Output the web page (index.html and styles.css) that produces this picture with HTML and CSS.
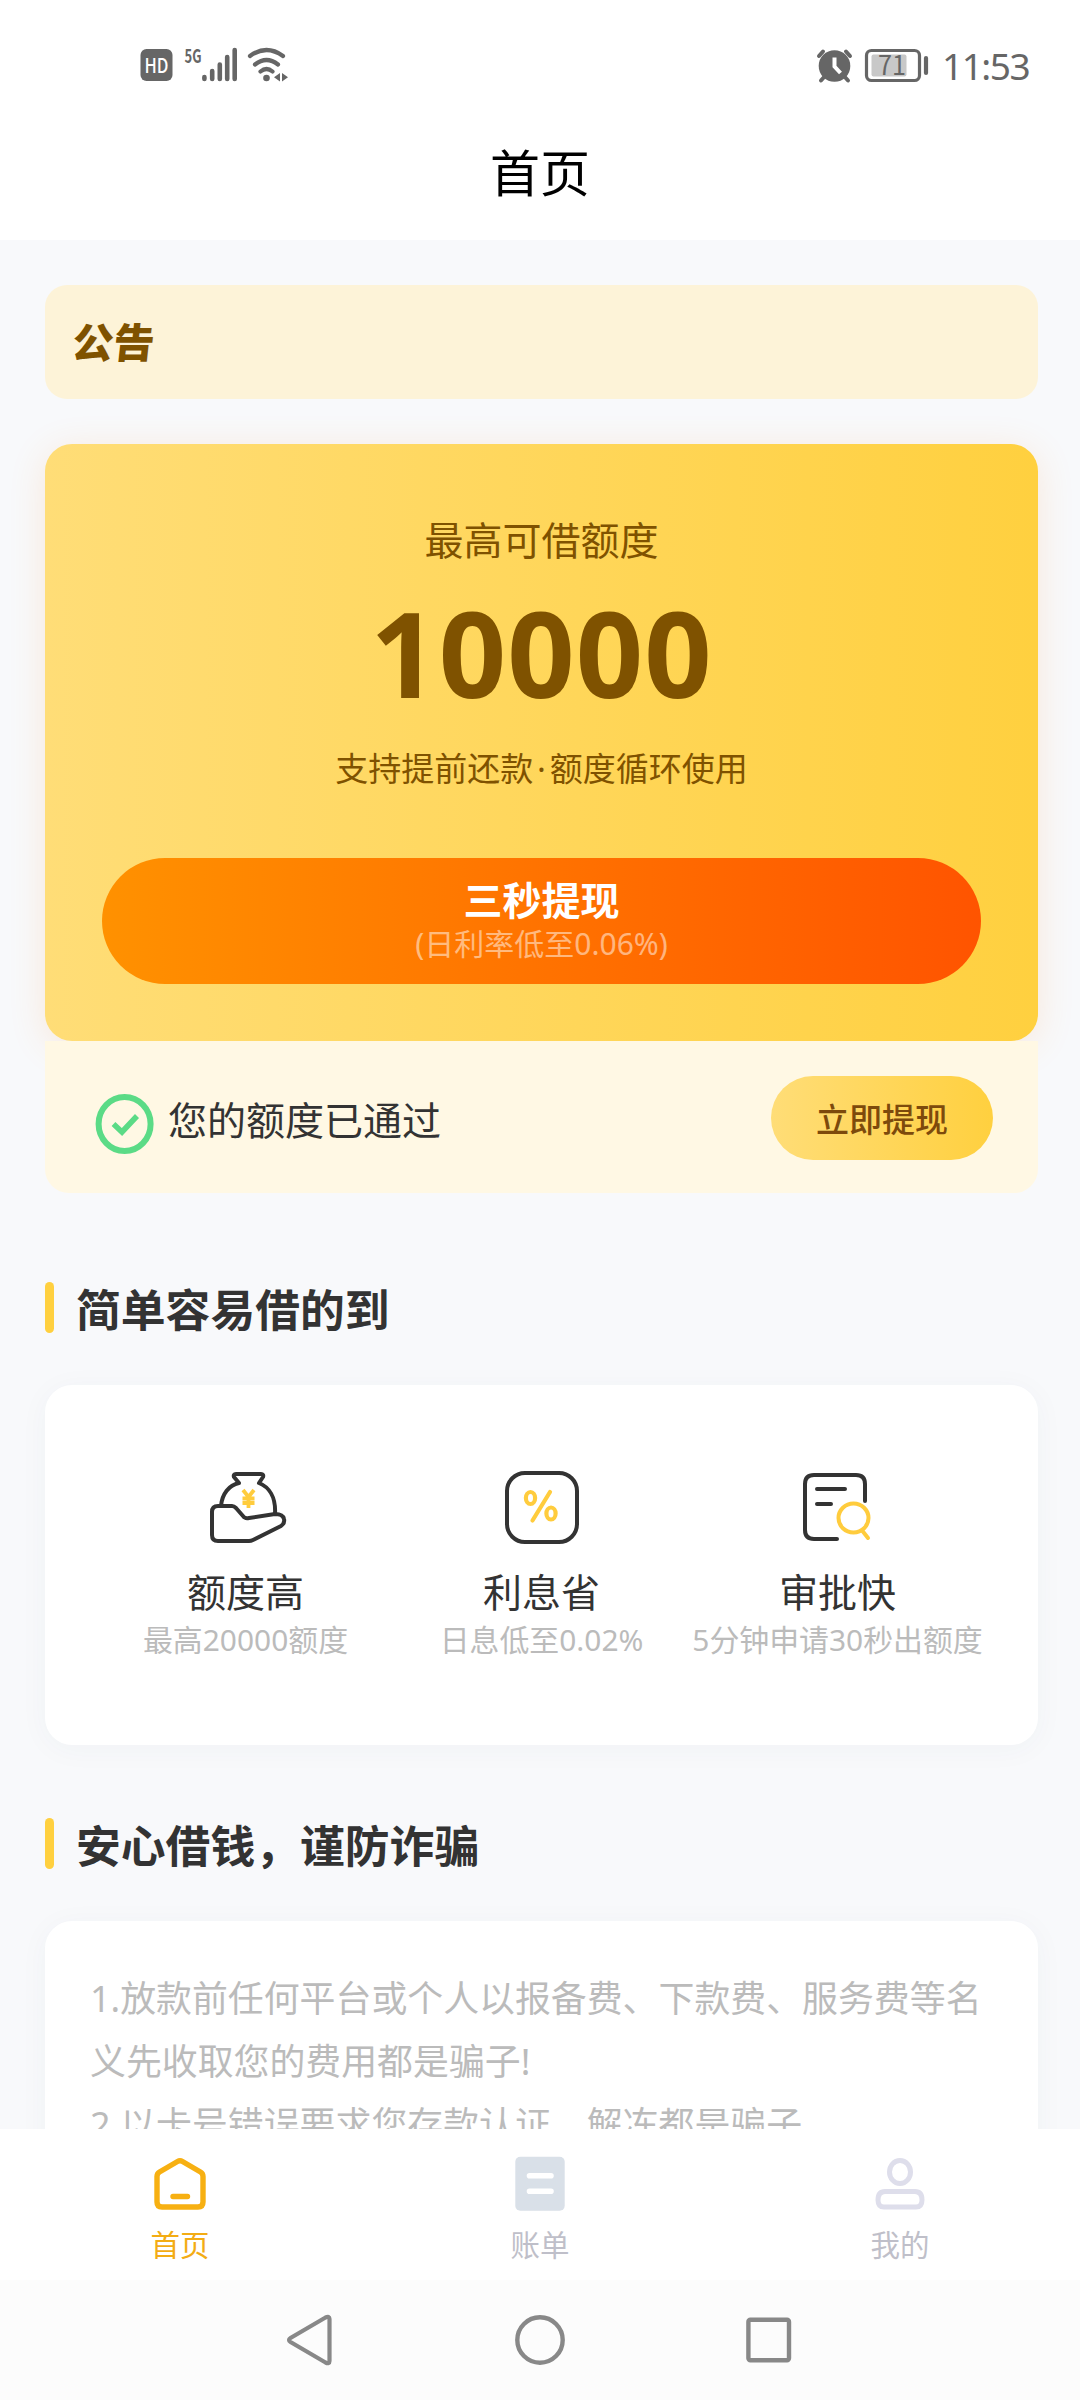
FILE: index.html
```html
<!DOCTYPE html>
<html lang="zh-CN">
<head>
<meta charset="utf-8">
<title>首页</title>
<link rel="stylesheet" href="styles.css">
</head>
<body>
<div class="screen">
  <header class="top">
    <div class="status">
      <svg class="status-left" width="160" height="44" viewBox="0 0 160 44">
        <rect x="5.500" y="7" width="32" height="32" rx="6" fill="#666"/>
        <text x="9.500" y="30.500" font-size="20" font-weight="500" fill="#fff" textLength="24" lengthAdjust="spacingAndGlyphs">HD</text>
        <text x="49.500" y="21" font-size="19" font-weight="700" fill="#666" textLength="17" lengthAdjust="spacingAndGlyphs">5G</text>
        <g stroke="#666" stroke-width="4.600" stroke-linecap="round">
          <path d="M69.400 35v2M77.200 29v8M84.800 22.500v14.500M92.200 15v22M99.700 8v29"/>
        </g>
        <g fill="none" stroke="#666" stroke-width="4.200" stroke-linecap="round">
          <path d="M115 14q16.500-12 33 0M120 22.500q11.500-9 23 0M125.500 29.500q6-5 12 0"/>
        </g>
        <circle cx="131.500" cy="36" r="3.300" fill="#666"/>
        <path d="M145 31v8.500l-6-4.200zM147 31v8.500l6-4.200z" fill="#666"/>
      </svg>
      <div class="status-right">
        <svg width="116" height="44" viewBox="0 0 116 44">
          <g stroke="#666" stroke-width="4" stroke-linecap="round" fill="none">
            <path d="M5 14l4-4.500M36 14l-4-4.500M11 34l-4 4.500M30 34l4 4.500"/>
          </g>
          <circle cx="20.500" cy="24" r="15.800" fill="#666"/>
          <path d="M20.500 15.500v9l6 6.500" fill="none" stroke="#fff" stroke-width="4"/>
          <rect x="52.500" y="8.500" width="53" height="30" rx="5" fill="none" stroke="#666" stroke-width="3.200"/>
          <rect x="57.500" y="12.500" width="35" height="22" rx="2" fill="#c8c8c8"/>
          <text x="64" y="33" font-size="27" fill="#666" textLength="28" lengthAdjust="spacingAndGlyphs">71</text>
          <path d="M112 16v15" stroke="#666" stroke-width="4.200" stroke-linecap="round"/>
        </svg>
        <span class="time">11:53</span>
      </div>
    </div>
    <h1 class="title">首页</h1>
  </header>

  <main class="content">
    <div class="notice"><span class="notice-tag">公告</span></div>

    <section class="hero">
      <p class="hero-label">最高可借额度</p>
      <p class="hero-amount">10000</p>
      <p class="hero-note">支持提前还款<span class="dot">·</span>额度循环使用</p>
      <div class="hero-button">
        <strong>三秒提现</strong>
        <span>(日利率低至0.06%)</span>
      </div>
    </section>

    <div class="passed">
      <svg width="60" height="62" viewBox="0 0 60 62">
        <ellipse cx="29.600" cy="31" rx="26" ry="27" fill="none" stroke="#5bdb86" stroke-width="6"/>
        <path d="M18.500 31l8.500 8 15-16" fill="none" stroke="#5bdb86" stroke-width="5.500"/>
      </svg>
      <span class="passed-text">您的额度已通过</span>
      <span class="passed-button">立即提现</span>
    </div>

    <h2 class="heading">简单容易借的到</h2>
    <section class="features">
      <div class="feature">
        <svg width="80" height="76" viewBox="-2 0 80 76">
          <g fill="none" stroke="#333" stroke-width="4" stroke-linejoin="round" stroke-linecap="round">
            <path d="M13 34C14 22 21 13 31 11L26 5Q25 2 28 2H53Q56 2 55 5L51 11C61 15 68 25 67 42"/>
            <path d="M10 34H24Q26 34 28 36L35 44Q37 47 41 46L67 42Q75 42 76 47Q77 51 73 54L45 68Q43 69 41 69H10Q4 69 4 63V40Q4 34 10 34Z"/>
          </g>
          <path d="M35 18l5.500 7 5.500-7M34.500 26.500h12M34.500 31h12M40.500 25v11" fill="none" stroke="#ffcc3d" stroke-width="3.800"/>
        </svg>
        <b>额度高</b>
        <small>最高20000额度</small>
      </div>
      <div class="feature">
        <svg width="80" height="76" viewBox="0 0 80 76">
          <rect x="5" y="1" width="70" height="69" rx="18" fill="none" stroke="#333" stroke-width="4"/>
          <g fill="none" stroke="#ffcc3d" stroke-width="4.200" stroke-linecap="round">
            <ellipse cx="28.500" cy="26" rx="4.600" ry="6"/>
            <ellipse cx="49" cy="41.500" rx="4.600" ry="6"/>
            <path d="M48 20L30.500 48.500"/>
          </g>
        </svg>
        <b>利息省</b>
        <small>日息低至0.02%</small>
      </div>
      <div class="feature">
        <svg width="80" height="76" viewBox="-1 0 80 76">
          <g fill="none" stroke="#333" stroke-width="4" stroke-linecap="round">
            <path d="M66 29V12Q66 3 57 3H15Q6 3 6 12V58Q6 67 15 67H38M18 17H46M18 32H32"/>
          </g>
          <g fill="none" stroke="#ffcc3d" stroke-width="4" stroke-linecap="round">
            <ellipse cx="54.500" cy="46" rx="15" ry="14.500"/>
            <path d="M63.500 59L69 66"/>
          </g>
        </svg>
        <b>审批快</b>
        <small>5分钟申请30秒出额度</small>
      </div>
    </section>

    <h2 class="heading heading-second">安心借钱，谨防诈骗</h2>
    <section class="tips">
      <p>1.放款前任何平台或个人以报备费、下款费、服务费等名<br>义先收取您的费用都是骗子!</p>
      <p>2.以卡号错误要求您存款认证，解冻都是骗子</p>
    </section>
  </main>

  <nav class="tabs">
    <div class="tab tab-active">
      <svg width="60" height="60" viewBox="0 0 60 60">
        <path d="M27.500 7.500Q30 6 32.500 7.500L50.500 18Q53 19.500 53 22.500V48Q53 53 48 53H12Q7 53 7 48V22.500Q7 19.500 9.500 18ZM23 42.500H37.500" fill="none" stroke="#f7b012" stroke-width="5.400" stroke-linecap="round"/>
      </svg>
      <span>首页</span>
    </div>
    <div class="tab">
      <svg width="60" height="60" viewBox="0 0 60 60">
        <rect x="5.300" y="2.700" width="49.400" height="54" rx="5" fill="#d9e0e8"/>
        <path d="M19.500 21.800H41M19.500 37.300H41" stroke="#fff" stroke-width="5.600" stroke-linecap="round"/>
      </svg>
      <span>账单</span>
    </div>
    <div class="tab">
      <svg width="60" height="60" viewBox="0 0 60 60">
        <g fill="none" stroke="#dedeeb" stroke-width="5">
          <ellipse cx="30" cy="18" rx="10.500" ry="11.500"/>
          <path d="M15 37.500H45Q52 37.500 52 46Q52 53 46 53H14Q8 53 8 46Q8 37.500 15 37.500Z"/>
        </g>
      </svg>
      <span>我的</span>
    </div>
  </nav>

  <footer class="system">
    <svg width="54" height="54" viewBox="0.500 0 54 54"><path d="M42 4.500Q46 2.500 46 6V48Q46 51.500 42 49.500L7 29Q4 27 7 25Z" fill="none" stroke="#888" stroke-width="4.200"/></svg>
    <svg width="54" height="54" viewBox="0 0 54 54"><circle cx="27" cy="27" r="22.700" fill="none" stroke="#888" stroke-width="4.400"/></svg>
    <svg width="54" height="54" viewBox="0 0 54 54"><rect x="6.400" y="6.700" width="40.600" height="40.600" rx="2" fill="none" stroke="#888" stroke-width="4.400"/></svg>
  </footer>
</div>
</body>
</html>
```
FILE: styles.css
```css
* {
  box-sizing: border-box;
  margin: 0;
  padding: 0;
}

body {
  width: 1080px;
  font-family: "Noto Sans CJK SC", "Noto Sans", sans-serif;
  color: #333;
  background: #f8f9fb;
}

svg {
  display: block;
  flex: none;
  overflow: visible;
}

.screen {
  display: flex;
  flex-direction: column;
  height: 2400px;
  overflow: hidden;
}

.top {
  flex: none;
  height: 240px;
  background: #fff;
}

.status {
  display: flex;
  justify-content: space-between;
  height: 110px;
  padding: 42px 46px 0 135px;
  color: #666;
}

.status-right {
  display: flex;
  gap: 12px;
}

.time {
  width: 92px;
  font: 400 37px/48px "Noto Sans", sans-serif;
  letter-spacing: -1.500px;
  white-space: nowrap;
}

.title {
  font-size: 50px;
  font-weight: 400;
  line-height: 121px;
  color: #000;
  text-align: center;
}

.content {
  flex: none;
  height: 1889px;
  padding: 45px 42px 0 45px;
  overflow: hidden;
}

.notice {
  display: flex;
  align-items: center;
  height: 114px;
  padding: 0 28px 5px;
  border-radius: 22px;
  background: #fdf3d8;
}

.notice-tag {
  font-size: 41px;
  font-weight: 900;
  line-height: 60px;
  color: #7f5200;
  transform: skewX(-6deg);
}

.hero {
  display: flex;
  flex-direction: column;
  align-items: center;
  height: 597px;
  margin-top: 45px;
  padding-top: 65px;
  border-radius: 27px;
  color: #7f5200;
  background: linear-gradient(90deg, #ffdd77, #ffd03f);
  box-shadow: 0 6px 36px rgba(255, 140, 50, 0.16);
}

.hero-label {
  font-size: 39px;
  line-height: 58px;
}

.hero-amount {
  margin-top: 18px;
  font: 700 118px/136px "Noto Sans", sans-serif;
  letter-spacing: 1px;
}

.hero-note {
  margin-top: 21px;
  font-size: 33px;
  line-height: 50px;
}

.dot {
  display: inline-block;
  width: 16.500px;
  font-family: "Noto Sans", sans-serif;
  text-align: center;
}

.hero-button {
  display: flex;
  flex-direction: column;
  align-items: center;
  width: 879px;
  height: 126px;
  margin-top: 64px;
  padding-top: 16px;
  border-radius: 63px;
  color: #fff;
  background: linear-gradient(90deg, #ff9100, #ff5400);
}

.hero-button strong {
  font-size: 39px;
  line-height: 48px;
}

.hero-button span {
  margin-top: 2px;
  font-family: "Noto Sans", "Noto Sans CJK SC", sans-serif;
  font-size: 30px;
  line-height: 40px;
  color: rgba(255, 255, 255, 0.5);
}

.passed {
  display: flex;
  align-items: center;
  height: 152px;
  padding: 1px 45px 0 50px;
  border-radius: 0 0 24px 24px;
  background: #fff8e4;
}

.passed svg {
  margin-top: 12px;
}

.passed-text {
  flex: 1;
  margin-left: 13px;
  font-size: 39px;
}

.passed-button {
  width: 222px;
  height: 84px;
  border-radius: 42px;
  font-size: 33px;
  font-weight: 500;
  line-height: 84px;
  color: #7d4a0c;
  text-align: center;
  background: linear-gradient(90deg, #ffdd77, #ffd03f);
}

.heading {
  display: flex;
  align-items: center;
  gap: 22px;
  height: 51px;
  margin: 89px 0 52px;
  font-size: 44.800px;
  line-height: 47px;
}

.heading::before {
  content: "";
  width: 9px;
  height: 51px;
  border-radius: 5px;
  background: #ffd03f;
}

.features {
  display: grid;
  grid-template-columns: repeat(3, 296px);
  justify-content: center;
  height: 360px;
  padding-top: 87px;
  border-radius: 27px;
  background: #fff;
  box-shadow: 0 4px 30px rgba(60, 80, 110, 0.04);
}

.feature {
  display: flex;
  flex-direction: column;
  align-items: center;
  white-space: nowrap;
}

.feature b {
  margin-top: 14px;
  font-size: 39px;
  font-weight: 400;
  line-height: 56px;
}

.feature small {
  font-family: "Noto Sans", "Noto Sans CJK SC", sans-serif;
  font-size: 29.900px;
  line-height: 43px;
  color: #bbb;
}

.heading-second {
  margin-top: 73px;
}

.tips {
  height: 300px;
  padding: 46px 45px;
  border-radius: 27px;
  font-family: "Noto Sans", "Noto Sans CJK SC", sans-serif;
  font-size: 35.900px;
  line-height: 63px;
  color: #bbb;
  white-space: nowrap;
  background: #fff;
  box-shadow: 0 4px 30px rgba(60, 80, 110, 0.04);
}

.tabs {
  position: relative;
  display: flex;
  flex: none;
  height: 151px;
  background: #fff;
}

.tab {
  display: flex;
  flex: 1;
  flex-direction: column;
  align-items: center;
  padding-top: 25px;
  font-size: 29.500px;
  line-height: 44px;
  color: #bfbfc9;
}

.tab span {
  margin-top: 7px;
}

.tab-active {
  color: #f3ac14;
}

.system {
  display: flex;
  flex: none;
  gap: 175px;
  justify-content: center;
  align-items: center;
  height: 120px;
  background: #fcfcfc;
}
```
